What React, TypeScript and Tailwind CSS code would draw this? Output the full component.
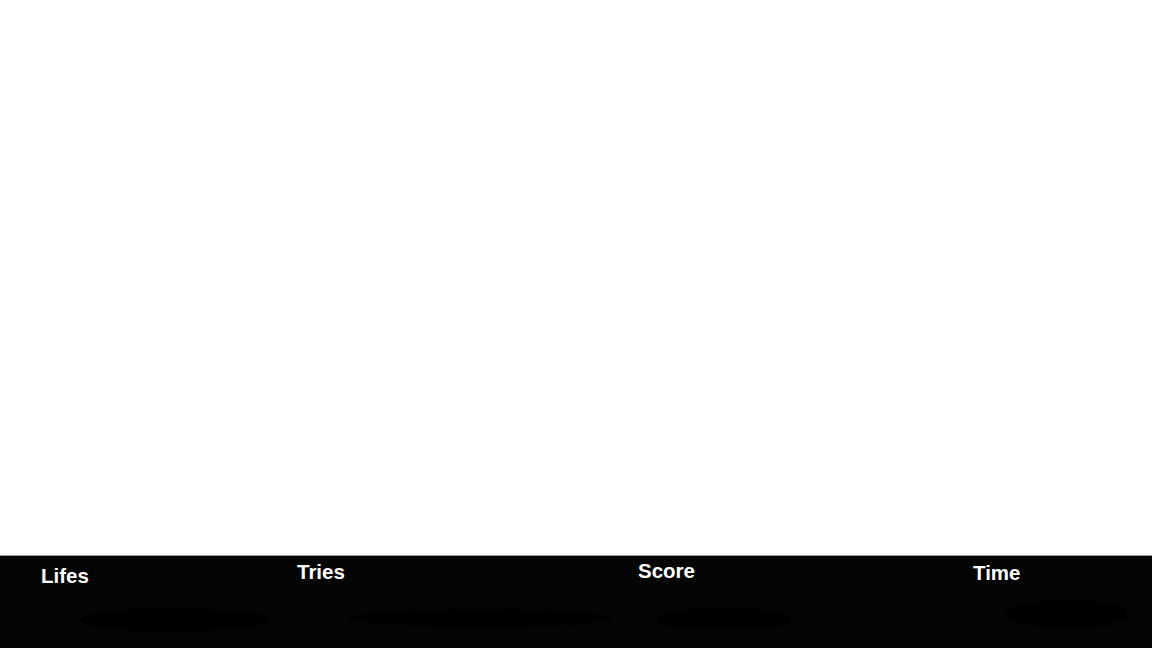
export default function App() {
  const stats = [
    { label: 'Lifes', width: 'w-[256px]', pad: 'pt-[10px]', blob: 'ml-[39px] w-[190px] h-[24px] mt-[22px]' },
    { label: 'Tries', width: 'w-[341px]', pad: 'pt-[6px]', blob: 'ml-[53px] w-[262px] h-[18px] mt-[27px]' },
    { label: 'Score', width: 'w-[335px]', pad: 'pt-[5px]', blob: 'ml-[17px] w-[138px] h-[22px] mt-[27px]' },
    { label: 'Time', width: 'flex-1', pad: 'pt-[7px]', blob: 'ml-[32px] w-[123px] h-[28px] mt-[17px]' },
  ];

  return (
    <div className="h-screen w-full flex flex-col bg-white font-['Liberation_Sans',Arial,sans-serif]">
      {/* play field */}
      <div className="flex-1" />

      {/* ── status bar ───────────────────────────── */}
      <div className="h-[93px] shrink-0 border-t border-[#9a9a9a] bg-[#050505] flex pl-[41px] pr-[4px]">
        {stats.map((s) => (
          <div key={s.label} className={`${s.width} ${s.pad} flex flex-col`}>
            <span className="text-[20.5px] leading-[20px] font-bold text-white">{s.label}</span>
            <div className={`${s.blob} rounded-[50%] bg-black`} />
          </div>
        ))}
      </div>
    </div>
  );
}
